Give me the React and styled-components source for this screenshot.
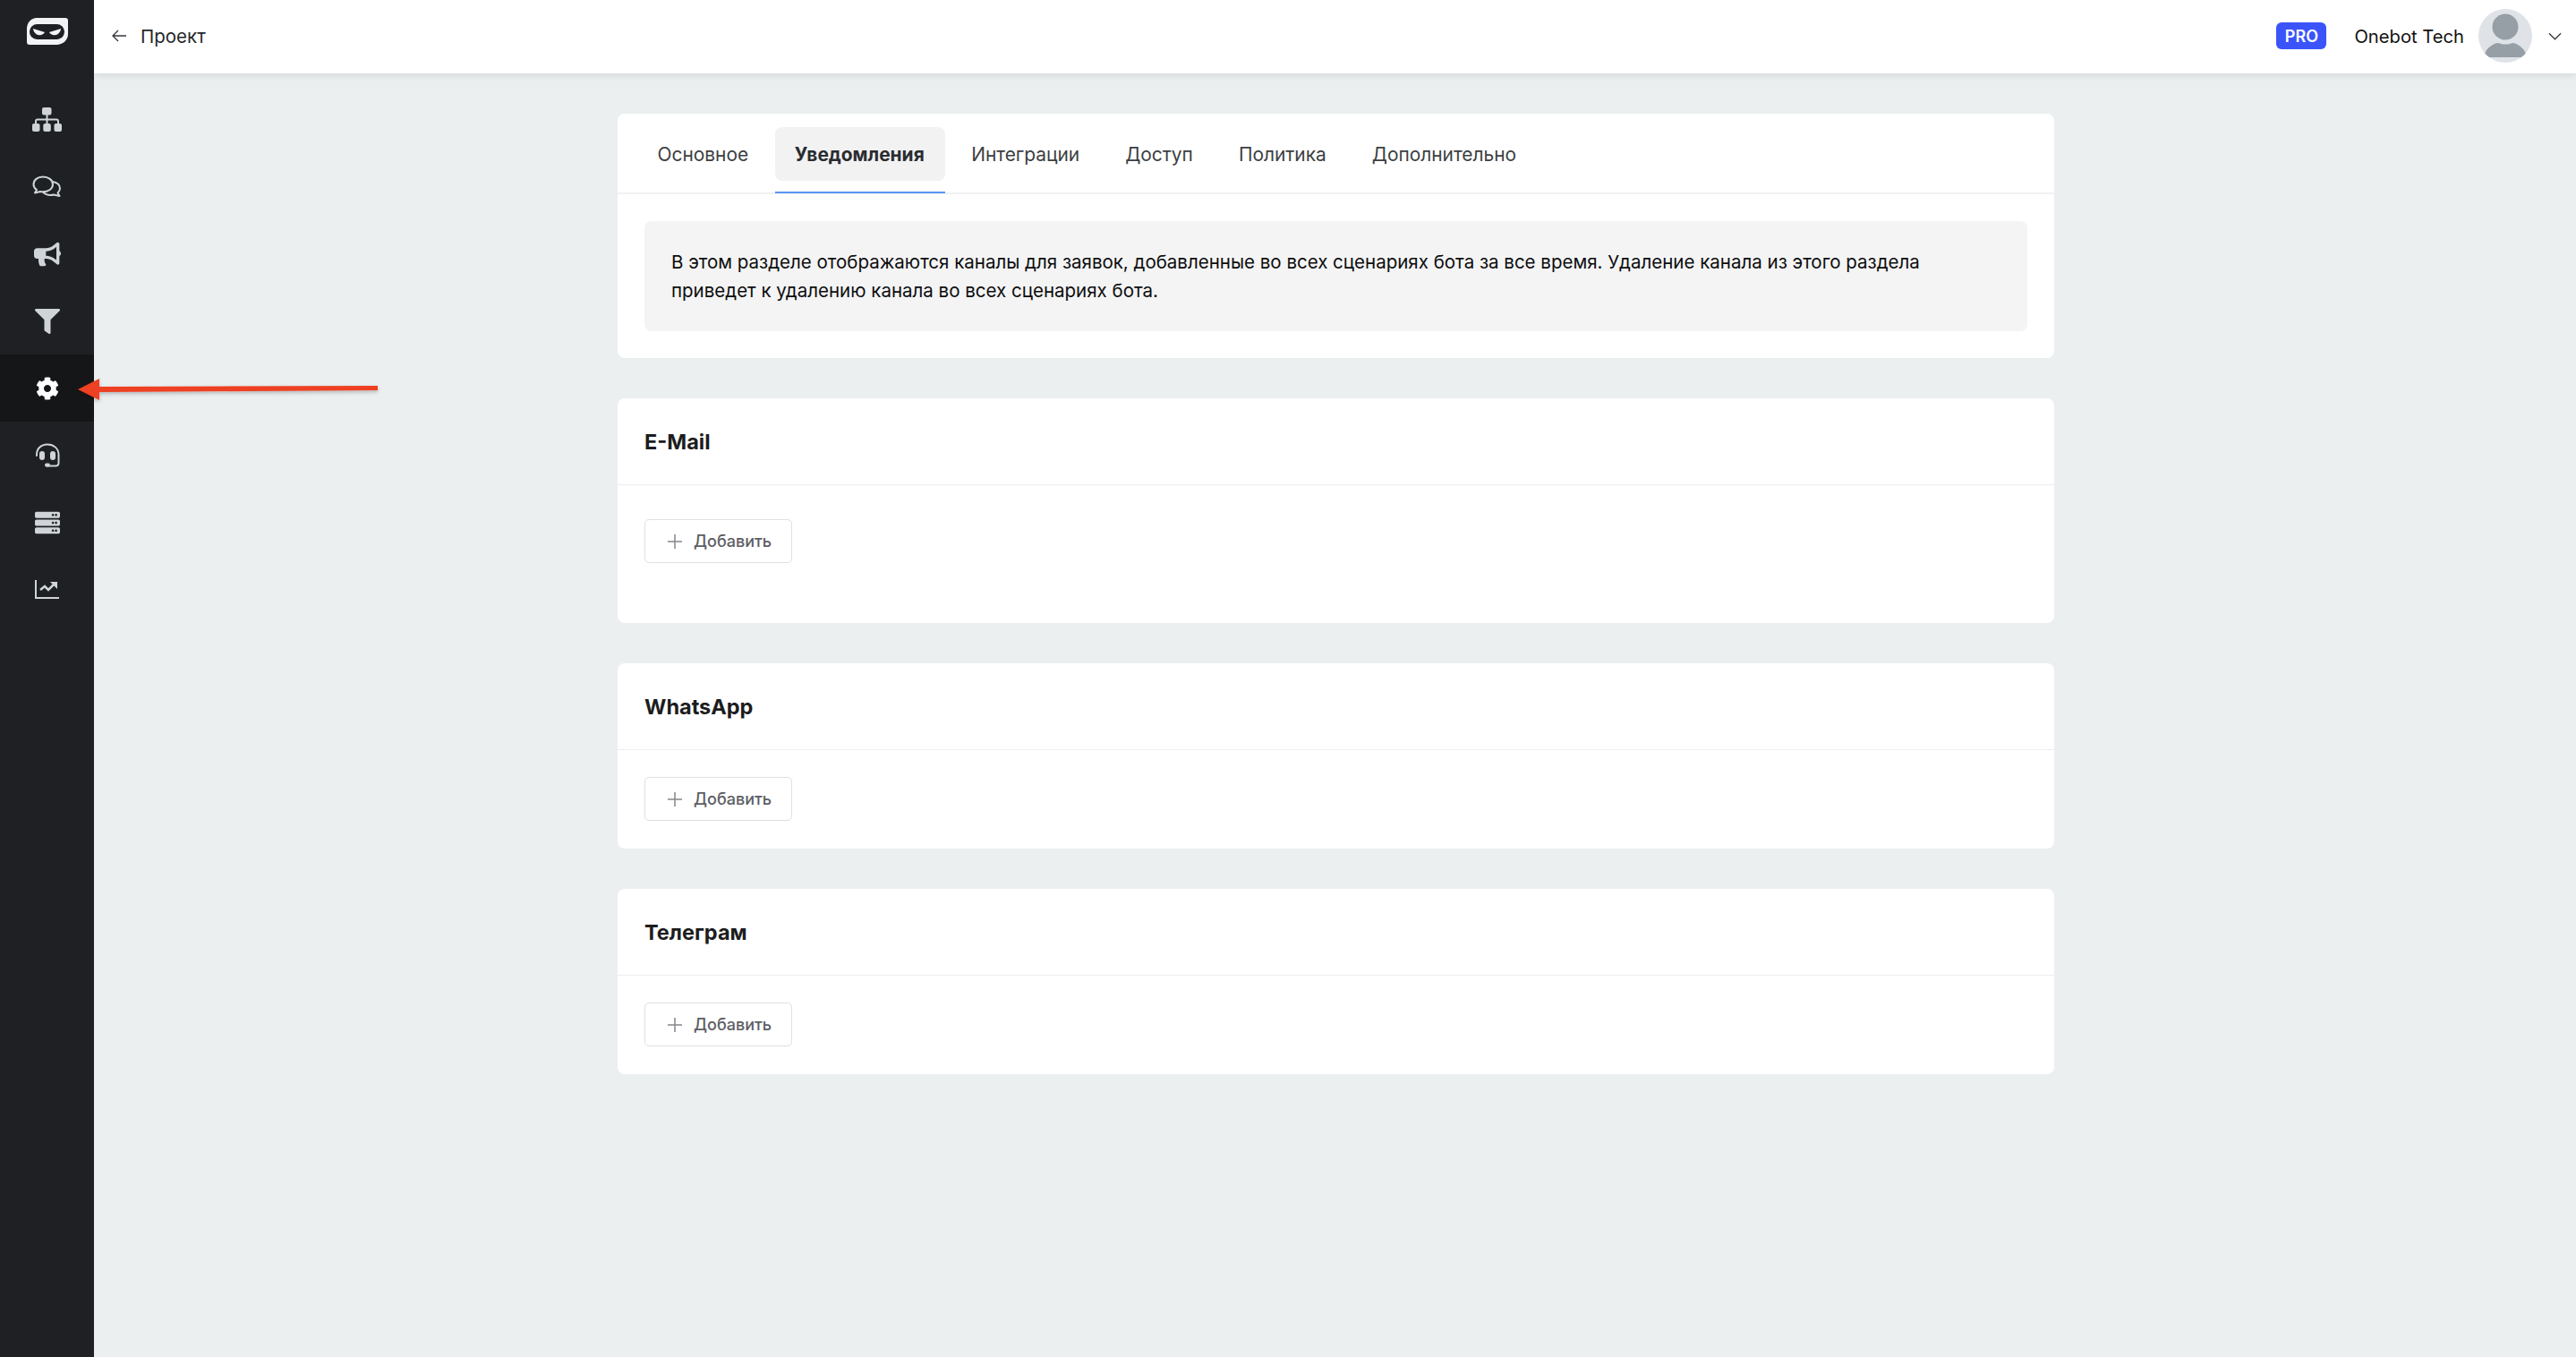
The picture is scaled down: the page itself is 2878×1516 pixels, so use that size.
import React from "react";
import styled, { createGlobalStyle } from "styled-components";
import { FaBullhorn, FaFilter, FaCog, FaServer } from "react-icons/fa";

const Global = createGlobalStyle`
  html, body {
    margin: 0;
    padding: 0;
    background: #ebeff0;
    font-family: Inter, "Noto Sans", sans-serif;
  }
  * { box-sizing: border-box; }
`;

const Page = styled.div`
  position: relative;
  display: flex;
  width: 2878px;
  height: 1516px;
  overflow: hidden;
  background: #ebeff0;
`;

const Sidebar = styled.aside`
  width: 105px;
  flex: none;
  display: flex;
  flex-direction: column;
  background: #1e2023;
`;

const LogoBox = styled.div`
  height: 96px;
  flex: none;
  padding: 20px 0 0 30px;
`;

const NavItem = styled.div`
  height: 75px;
  display: flex;
  align-items: center;
  justify-content: center;
  background: ${(p) => (p.$active ? "#151618" : "transparent")};
  color: ${(p) => (p.$active ? "#ffffff" : "#ced4d8")};
  font-size: 28px;
`;

const Main = styled.div`
  flex: 1;
  display: flex;
  flex-direction: column;
  min-width: 0;
`;

const Header = styled.header`
  height: 82px;
  flex: none;
  display: flex;
  align-items: center;
  justify-content: space-between;
  padding: 0 16px 2px 20px;
  background: #fff;
  box-shadow: 0 2px 8px rgba(30, 40, 50, 0.12);
`;

const Back = styled.div`
  display: flex;
  align-items: center;
  gap: 16px;
  font-size: 20.5px;
  color: #26282b;
`;

const UserArea = styled.div`
  display: flex;
  align-items: center;
`;

const ProBadge = styled.span`
  width: 56px;
  height: 30px;
  display: flex;
  align-items: center;
  justify-content: center;
  border-radius: 6px;
  background: #3b54f9;
  color: #fff;
  font-size: 18px;
  font-weight: 600;
`;

const UserName = styled.span`
  margin-left: 31px;
  font-size: 20.2px;
  color: #111;
  white-space: nowrap;
`;

const Avatar = styled.div`
  width: 60px;
  height: 60px;
  margin-left: 16px;
  border-radius: 50%;
  overflow: hidden;
  background: #dfe3e7;
`;

const Chevron = styled.div`
  margin-left: 18px;
  display: flex;
`;

const Content = styled.main`
  width: 1605px;
  margin-left: 585px;
  padding-top: 45px;
  display: flex;
  flex-direction: column;
  gap: 45px;
`;

const Card = styled.section`
  background: #fff;
  border-radius: 8px;
`;

const Tabs = styled.nav`
  height: 90px;
  display: flex;
  align-items: flex-start;
  padding: 15px 0 0 23px;
  gap: 8px;
  border-bottom: 2px solid #eff1f3;
`;

const Tab = styled.div`
  position: relative;
  height: 60px;
  padding: 0 ${(p) => (p.$active ? "23px 0 22px" : "21.5px")};
  display: flex;
  align-items: center;
  border-radius: 8px;
  font-size: 20.9px;
  font-weight: ${(p) => (p.$active ? 700 : 400)};
  color: ${(p) => (p.$active ? "#2a2c30" : "#3c3f43")};
  background: ${(p) => (p.$active ? "#f2f2f3" : "transparent")};
  &::after {
    content: "";
    display: ${(p) => (p.$active ? "block" : "none")};
    position: absolute;
    left: 0;
    right: 0;
    top: 72px;
    height: 2px;
    background: #5b95f5;
  }
`;

const NoteWrap = styled.div`
  padding: 30px;
`;

const Note = styled.div`
  height: 123px;
  padding: 30px 30px 0;
  border-radius: 8px;
  background: #f4f4f5;
  font-size: 20.5px;
  line-height: 32px;
  color: #0d0d0d;
`;

const CardHead = styled.div`
  height: 97px;
  display: flex;
  align-items: center;
  padding: 0 30px;
  border-bottom: 1px solid #eceef1;
  font-size: 23.5px;
  font-weight: 700;
  color: #1c1d20;
`;

const CardBody = styled.div`
  padding: ${(p) => p.$top}px 30px ${(p) => p.$bottom}px;
`;

const AddButton = styled.button`
  width: 165px;
  height: 49px;
  display: flex;
  align-items: center;
  gap: 13px;
  padding: 0 0 0 25px;
  border: 1px solid #dfdfe5;
  border-radius: 5px;
  background: #fff;
  font-family: inherit;
  font-size: 18px;
  font-weight: 500;
  color: #5c5e64;
`;

const ArrowOverlay = styled.svg`
  position: absolute;
  left: 80px;
  top: 410px;
`;

const Logo = () => (
  <svg width="46" height="30" viewBox="0 0 46 30">
    <path d="M11 0H43a3 3 0 0 1 3 3V18C46 25 40 30 33 30H3a3 3 0 0 1-3-3V12C0 5 5 0 11 0Z" fill="#f2f3f5" />
    <rect x="3" y="7" width="39" height="17" rx="8.5" fill="#1e2023" />
    <path d="M7 12L20 16C19 19 14 20 11 18.5C9 17 7 15 7 12Z" fill="#f2f3f5" />
    <path d="M38 12L25 16C26 19 31 20 34 18.5C36 17 38 15 38 12Z" fill="#f2f3f5" />
  </svg>
);

const Sitemap = () => (
  <svg width="33" height="27" viewBox="0 0 33 27" fill="#ced4d8">
    <rect x="11" y="0" width="10.5" height="8.5" rx="2" />
    <rect x="0" y="18" width="8.5" height="9" rx="2" />
    <rect x="12.3" y="18" width="8.5" height="9" rx="2" />
    <rect x="24.5" y="18" width="8.5" height="9" rx="2" />
    <path d="M16.5 8V18M4 18V15.5Q4 13.5 6 13.5H27Q29 13.5 29 15.5V18" fill="none" stroke="#ced4d8" strokeWidth="2" />
  </svg>
);

const Comments = () => (
  <svg width="33" height="25" viewBox="0 0 33 25" fill="none" stroke="#ced4d8" strokeWidth="2" strokeLinejoin="round">
    <path d="M12 1.5C6 1.5 1.5 5 1.5 10C1.5 12.5 2.8 14.5 5 16L3 19.5L9 18C10 18.2 11 18.3 12 18.3C18 18.3 23 14.8 23 10C23 5 18 1.5 12 1.5Z" />
    <path d="M23 7C28 8 31 11 31 14.5C31 16.5 30 18 28.5 19.5L30.5 23L24 21.5C20 22.5 15 21.5 12 18.5" />
  </svg>
);

const Headset = () => (
  <svg width="28" height="28" viewBox="0 0 28 28" fill="none">
    <path d="M2 14C1.6 6 7 1.5 14 1.5S26.5 6 26.5 13V22C26.5 24.5 25 25.5 23 25.5H13" stroke="#ced4d8" strokeWidth="2" strokeLinecap="round" />
    <rect x="5" y="9" width="6" height="10" rx="3" fill="#ced4d8" />
    <rect x="17" y="9" width="6" height="10" rx="3" fill="#ced4d8" />
    <rect x="11" y="22.5" width="6" height="4" rx="2" fill="#ced4d8" />
  </svg>
);

const Chart = () => (
  <svg width="27" height="21" viewBox="0 0 27 21" fill="none" stroke="#ced4d8">
    <path d="M1 0V20H27" strokeWidth="2" />
    <path d="M6 11L11 7L15 11L21 5" strokeWidth="2.5" />
    <path d="M17 2H25V10Z" fill="#ced4d8" stroke="none" />
  </svg>
);

const Section = ({ title, top, bottom }) => (
  <Card>
    <CardHead>{title}</CardHead>
    <CardBody $top={top} $bottom={bottom}>
      <AddButton>
        <svg width="16" height="16" viewBox="0 0 16 16" stroke="#85878c" strokeWidth="1.5">
          <path d="M8 0V16M0 8H16" />
        </svg>
        Добавить
      </AddButton>
    </CardBody>
  </Card>
);

const tabs = ["Основное", "Уведомления", "Интеграции", "Доступ", "Политика", "Дополнительно"];

export default function App() {
  return (
    <Page>
      <Global />
      <Sidebar>
        <LogoBox>
          <Logo />
        </LogoBox>
        <NavItem><Sitemap /></NavItem>
        <NavItem><Comments /></NavItem>
        <NavItem><FaBullhorn size={30} /></NavItem>
        <NavItem><FaFilter /></NavItem>
        <NavItem $active><FaCog size={26} /></NavItem>
        <NavItem><Headset /></NavItem>
        <NavItem><FaServer /></NavItem>
        <NavItem><Chart /></NavItem>
      </Sidebar>
      <Main>
        <Header>
          <Back>
            <svg width="16" height="14" viewBox="0 0 16 14" fill="none" stroke="#33363a" strokeWidth="1.3">
              <path d="M16 7H1M7 1L1 7L7 13" />
            </svg>
            Проект
          </Back>
          <UserArea>
            <ProBadge>PRO</ProBadge>
            <UserName>Onebot Tech</UserName>
            <Avatar>
              <svg width="60" height="60" viewBox="0 0 60 60">
                <circle cx="30" cy="20" r="14.5" fill="#969fa6" />
                <path d="M7 50C9 44 17 38 22 38C27 40 33 40 38 38C43 38 51 44 53 50C53 53 50 54 47 54H13C10 54 7 53 7 50Z" fill="#969fa6" />
              </svg>
            </Avatar>
            <Chevron>
              <svg width="15" height="9" viewBox="0 0 16 9" fill="none" stroke="#33363a" strokeWidth="1.3">
                <path d="M1 1L8 8L15 1" />
              </svg>
            </Chevron>
          </UserArea>
        </Header>
        <Content>
          <Card>
            <Tabs>
              {tabs.map((t, i) => (
                <Tab key={t} $active={i === 1}>{t}</Tab>
              ))}
            </Tabs>
            <NoteWrap>
              <Note>
                В этом разделе отображаются каналы для заявок, добавленные во всех сценариях бота за все время. Удаление канала из этого раздела приведет к удалению канала во всех сценариях бота.
              </Note>
            </NoteWrap>
          </Card>
          <Section title="E-Mail" top={38} bottom={67} />
          <Section title="WhatsApp" top={30} bottom={31} />
          <Section title="Телеграм" top={30} bottom={31} />
        </Content>
      </Main>
      <ArrowOverlay width="350" height="50" viewBox="0 0 350 50">
        <defs>
          <filter id="s" x="-5%" y="-50%" width="110%" height="200%">
            <feDropShadow dx="0" dy="2" stdDeviation="2" floodOpacity="0.25" />
          </filter>
        </defs>
        <path d="M7 25L31 13V22L342 21V26L31 28V37Z" fill="#ee4023" filter="url(#s)" />
      </ArrowOverlay>
    </Page>
  );
}
